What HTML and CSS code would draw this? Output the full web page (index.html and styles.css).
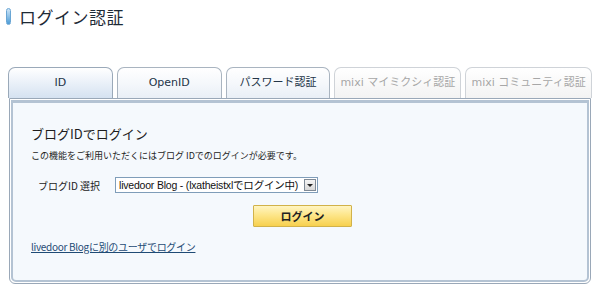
FILE: index.html
```html
<!DOCTYPE html>
<html lang="ja">
<head>
  <meta charset="UTF-8">
  <title>ログイン認証</title>
  <link rel="stylesheet" href="styles.css">
</head>
<body>

  <h1 class="page-title"><span class="title-mark"></span>ログイン認証</h1>

  <div class="auth-box">
      <ul class="tabs">
          <li class="tab tab-active">ID</li>
          <li class="tab">OpenID</li>
          <li class="tab">パスワード認証</li>
          <li class="tab tab-disabled">mixi マイミクシィ認証</li>
          <li class="tab tab-disabled">mixi コミュニティ認証</li>
      </ul>
      <div class="panel">
          <div class="panel-inner">
              <h2>ブログIDでログイン</h2>
              <p class="desc">この機能をご利用いただくにはブログ IDでのログインが必要です。</p>
              <div class="form-row">
                  <label class="blog-label">ブログID 選択</label>
                  <div class="select-box">
                      <span class="select-text">livedoor Blog - (lxatheistxlでログイン中)</span>
                      <span class="select-arrow"></span>
                  </div>
              </div>
              <div class="button-row">
                  <button type="button" class="login-button">ログイン</button>
              </div>
              <a class="other-link" href="#">livedoor Blogに別のユーザでログイン</a>
          </div>
      </div>
  </div>

</body>
</html>
```

FILE: styles.css
```css
body {
  margin: 0;
  padding: 0;
  background-color: #ffffff;
  font-family: "Noto Sans CJK JP", "DejaVu Sans", sans-serif;
  color: #222;
  width: 600px;
  height: 292px;
  overflow: hidden;
}

.page-title {
  display: flex;
  align-items: center;
  gap: 8px;
  margin: 0;
  padding: 4px 0 0 6px;
  height: 24px;
  font-size: 17px;
  font-weight: normal;
  color: #1e2a36;
  letter-spacing: 0.5px;
}

.title-mark {
  display: block;
  width: 5px;
  height: 17px;
  border-radius: 3px;
  background: linear-gradient(to bottom, #cfe6f8, #4b9bd6);
  border: 1px solid #6aa6d4;
  box-sizing: border-box;
}

.auth-box {
  margin: 39px 0 0 8px;
  width: 584px;
}

.tabs {
  list-style: none;
  margin: 0;
  padding: 0;
  display: flex;
  gap: 4px;
  height: 31px;
}

.tab {
  box-sizing: border-box;
  width: 105px;
  height: 31px;
  border: 1px solid #a9b4c0;
  border-bottom: none;
  border-radius: 7px 7px 0 0;
  background: linear-gradient(to bottom, #ffffff 0%, #f4f7fb 55%, #e9eff6 100%);
  text-align: center;
  font-family: "DejaVu Sans", "Noto Sans CJK JP", sans-serif;
  font-size: 11px;
  line-height: 30px;
  color: #233447;
}

.tab-active {
  background: linear-gradient(to bottom, #ffffff 0%, #eef3fa 40%, #d5e2f1 100%);
  border-color: #9aa9b9;
}

.tab-disabled {
  width: 127px;
  color: #a7a7a7;
  border-color: #cfd3d8;
  background: linear-gradient(to bottom, #ffffff, #f3f3f3);
}

.panel {
  box-sizing: border-box;
  width: 582px;
  height: 186px;
  margin-left: 1px;
  border: 1px solid #9aa8b8;
  border-radius: 0 0 6px 6px;
  padding: 1px;
  background: #ffffff;
}

.panel-inner {
  box-sizing: border-box;
  height: 100%;
  border: 2px solid #b4c3d3;
  border-top-width: 3px;
  border-radius: 0 0 5px 5px;
  background: #f5f9fd;
  padding: 21px 0 0 18px;
}

h2 {
  margin: 0;
  font-size: 13px;
  font-weight: normal;
  color: #1d1d1d;
  line-height: 20px;
}

.desc {
  margin: 6px 0 0 0;
  font-size: 9px;
  line-height: 12px;
  color: #222;
}

.form-row {
  display: flex;
  align-items: center;
  margin: 15px 0 0 7px;
}

.blog-label {
  width: 77px;
  font-size: 10px;
  color: #222;
}

.select-box {
  display: flex;
  align-items: center;
  justify-content: space-between;
  box-sizing: border-box;
  width: 203px;
  height: 16px;
  border: 1px solid #7f9db9;
  background: #ffffff;
  padding: 0 1px 0 3px;
}

.select-text {
  font-family: "Liberation Sans", "Noto Sans CJK JP", sans-serif;
  font-size: 10.5px;
  line-height: 14px;
  color: #111;
  letter-spacing: -0.2px;
}

.select-arrow {
  position: relative;
  box-sizing: border-box;
  width: 12px;
  height: 12px;
  border: 1px solid #7f8a96;
  background: linear-gradient(to bottom, #f4f4f4, #d8d8d8);
}

.select-arrow::after {
  content: "";
  position: absolute;
  left: 2px;
  top: 4px;
  border-left: 3px solid transparent;
  border-right: 3px solid transparent;
  border-top: 3px solid #222;
}

.button-row {
  display: flex;
  margin: 12px 0 0 222px;
}

.login-button {
  box-sizing: border-box;
  width: 99px;
  height: 22px;
  border: 1px solid #d1b24a;
  border-radius: 1px;
  background: linear-gradient(to bottom, #fff5c2 0%, #fde68a 45%, #f7d04e 100%);
  font-family: "Noto Sans CJK JP", sans-serif;
  font-size: 11px;
  font-weight: bold;
  color: #222;
  padding: 0;
  cursor: pointer;
}

.other-link {
  display: inline-block;
  margin-top: 12px;
  font-size: 10px;
  color: #1f4b75;
  text-decoration: underline;
  letter-spacing: -0.3px;
}
```
